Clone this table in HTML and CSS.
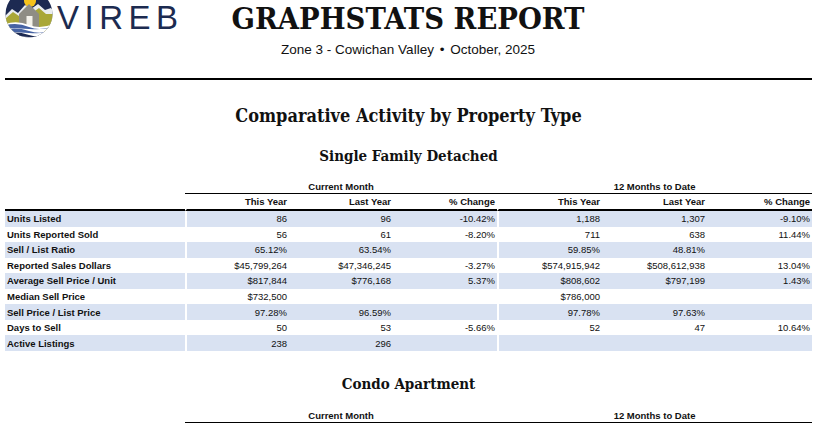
FILE: index.html
```html
<!DOCTYPE html>
<html lang="en">
<head>
<meta charset="utf-8">
<title>GraphStats Report</title>
<link rel="stylesheet" href="styles.css">
</head>
<body>
<header class="masthead">
  <div class="brand">
    <svg class="brand-mark" viewBox="0 0 50 38" width="50" height="38" aria-hidden="true">
      <defs>
        <clipPath id="disc"><circle cx="24" cy="14" r="23.5"/></clipPath>
      </defs>
      <g clip-path="url(#disc)">
        <rect x="0" y="-12" width="50" height="52" fill="#1d2a52"/>
        <circle cx="25" cy="1" r="6" fill="#f6c21c"/>
        <polygon points="0,30 0,16 7,9 13,13 20,5 26,9 33,4 40,10 46,8 50,12 50,30" fill="#e9ecef"/>
        <polygon points="0,32 0,19 8,12 14,16 21,9 27,13 34,8 41,14 50,14 50,32" fill="#a9a738"/>
        <polygon points="14,14 24,4 34,14 34,27 14,27" fill="#8f8d84"/>
        <rect x="21.5" y="16" width="6" height="11" fill="#f4f2ea"/>
        <path d="M0 24 Q12 20 24 25 T50 23 L50 40 L0 40 Z" fill="#ffffff"/>
        <path d="M0 25.5 Q12 22 24 27 T50 25 L50 27.5 Q37 30 24 29 T0 28 Z" fill="#4663a3"/>
        <path d="M0 29.5 Q12 27 24 31 T50 29.5 L50 31.5 Q37 34 24 33 T0 32 Z" fill="#4663a3"/>
        <path d="M0 33.5 Q12 31 24 35 T50 33.5 L50 36 Q37 38 24 37 T0 36 Z" fill="#1d2a52"/>
      </g>
    </svg>
    <span class="brand-name">VIREB</span>
  </div>
  <div class="title-block">
    <h1 class="report-title">GRAPHSTATS REPORT</h1>
    <p class="report-sub">Zone 3 - Cowichan Valley <span class="dot">•</span> October, 2025</p>
  </div>
  <div class="spacer"></div>
</header>
<hr class="rule">

<main class="content">
  <h2 class="page-heading">Comparative Activity by Property Type</h2>

  <section class="block">
    <h3 class="section-heading">Single Family Detached</h3>
    <table class="stats">
      <colgroup>
        <col class="c-label"><col class="c-a"><col class="c-a"><col class="c-a"><col class="c-b"><col class="c-b"><col class="c-b">
      </colgroup>
      <thead>
        <tr class="grp-row">
          <th class="blank"></th>
          <th colspan="3" class="grp">Current Month</th>
          <th colspan="3" class="grp">12 Months to Date</th>
        </tr>
        <tr class="col-row">
          <th class="lbl"></th>
          <th class="gap">This Year</th><th>Last Year</th><th>% Change</th>
          <th class="gap">This Year</th><th>Last Year</th><th>% Change</th>
        </tr>
      </thead>
      <tbody>
        <tr class="alt"><th class="lbl">Units Listed</th><td class="gap">86</td><td>96</td><td>-10.42%</td><td class="gap">1,188</td><td>1,307</td><td>-9.10%</td></tr>
        <tr><th class="lbl">Units Reported Sold</th><td class="gap">56</td><td>61</td><td>-8.20%</td><td class="gap">711</td><td>638</td><td>11.44%</td></tr>
        <tr class="alt"><th class="lbl">Sell / List Ratio</th><td class="gap">65.12%</td><td>63.54%</td><td></td><td class="gap">59.85%</td><td>48.81%</td><td></td></tr>
        <tr><th class="lbl">Reported Sales Dollars</th><td class="gap">$45,799,264</td><td>$47,346,245</td><td>-3.27%</td><td class="gap">$574,915,942</td><td>$508,612,938</td><td>13.04%</td></tr>
        <tr class="alt"><th class="lbl">Average Sell Price / Unit</th><td class="gap">$817,844</td><td>$776,168</td><td>5.37%</td><td class="gap">$808,602</td><td>$797,199</td><td>1.43%</td></tr>
        <tr><th class="lbl">Median Sell Price</th><td class="gap">$732,500</td><td></td><td></td><td class="gap">$786,000</td><td></td><td></td></tr>
        <tr class="alt"><th class="lbl">Sell Price / List Price</th><td class="gap">97.28%</td><td>96.59%</td><td></td><td class="gap">97.78%</td><td>97.63%</td><td></td></tr>
        <tr><th class="lbl">Days to Sell</th><td class="gap">50</td><td>53</td><td>-5.66%</td><td class="gap">52</td><td>47</td><td>10.64%</td></tr>
        <tr class="alt"><th class="lbl">Active Listings</th><td class="gap">238</td><td>296</td><td></td><td class="gap"></td><td></td><td></td></tr>
      </tbody>
    </table>
  </section>

  <section class="block">
    <h3 class="section-heading">Condo Apartment</h3>
    <table class="stats">
      <colgroup>
        <col class="c-label"><col class="c-a"><col class="c-a"><col class="c-a"><col class="c-b"><col class="c-b"><col class="c-b">
      </colgroup>
      <thead>
        <tr class="grp-row">
          <th class="blank"></th>
          <th colspan="3" class="grp">Current Month</th>
          <th colspan="3" class="grp">12 Months to Date</th>
        </tr>
      </thead>
    </table>
  </section>
</main>
</body>
</html>
```

FILE: styles.css
```css
* { box-sizing: border-box; }

html, body {
  margin: 0;
  padding: 0;
  background: #ffffff;
  color: #111111;
  font-family: "Liberation Sans", Arial, sans-serif;
}

body {
  width: 816px;
  height: 428px;
  overflow: hidden;
}

.masthead {
  display: grid;
  grid-template-columns: 1fr auto 1fr;
  align-items: start;
}

.brand {
  display: flex;
  align-items: flex-start;
  padding-left: 5px;
}

.brand-mark {
  display: block;
  flex: none;
}

.brand-name {
  margin-left: 2px;
  font-family: "Liberation Sans", Arial, sans-serif;
  font-size: 33px;
  line-height: 36px;
  letter-spacing: 5.5px;
  color: #1c2b50;
  font-weight: normal;
}

.title-block {
  text-align: center;
}

.report-title {
  margin: 0;
  font-family: "DejaVu Serif", serif;
  font-stretch: condensed;
  font-weight: bold;
  font-size: 30.5px;
  line-height: 36px;
  color: #111111;
}

.report-sub {
  margin: 6px 0 0;
  font-size: 13.5px;
  line-height: 16px;
  color: #111111;
}

.report-sub .dot {
  padding: 0 2px;
}

.rule {
  margin: 20px 4px 0 5px;
  border: 0;
  border-top: 2px solid #000000;
  height: 0;
}

.content {
  padding: 0 4px 0 5px;
}

.page-heading {
  margin: 25px 0 0;
  text-align: center;
  font-family: "DejaVu Serif", serif;
  font-stretch: condensed;
  font-weight: bold;
  font-size: 18px;
  line-height: 22px;
}

.section-heading {
  margin: 20px 0 15px;
  text-align: center;
  font-family: "DejaVu Serif", serif;
  font-stretch: condensed;
  font-weight: bold;
  font-size: 15px;
  line-height: 18px;
}

.block + .block .section-heading {
  margin-top: 24px;
  margin-bottom: 16px;
}

.stats {
  width: 807px;
  table-layout: fixed;
  border-collapse: separate;
  border-spacing: 0;
  font-size: 9.5px;
  color: #111111;
}

.c-label { width: 180px; }
.c-a { width: 104px; }
.c-b { width: 105px; }

.stats th,
.stats td {
  padding: 0 2px 0 2px;
  text-align: right;
  white-space: nowrap;
  height: 15.56px;
  line-height: 15px;
  font-weight: normal;
}

.stats thead th { font-weight: bold; }

.grp-row th {
  height: 14px;
  line-height: 13px;
}

.grp-row .grp {
  text-align: center;
  border-bottom: 1.5px solid #000000;
}

.col-row th {
  height: 17px;
  line-height: 15px;
  border-bottom: 2px solid #000000;
}

.stats .gap {
  border-left: 2px solid #ffffff;
}

.stats th.lbl {
  text-align: left;
  font-weight: bold;
}

.alt th,
.alt td {
  background: #d9e2f2;
}
```
